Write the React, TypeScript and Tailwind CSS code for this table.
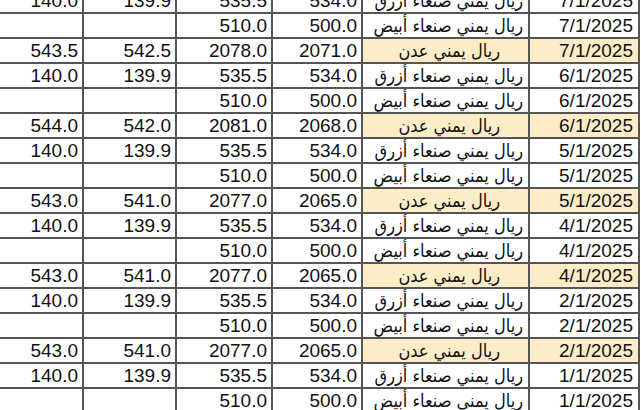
type Row = {
  date: string;
  kind: "blue" | "white" | "aden";
  buy: string;
  sell: string;
  c3?: string;
  c4?: string;
};

const LABELS = {
  blue: "ريال يمني صنعاء أزرق",
  white: "ريال يمني صنعاء أبيض",
  aden: "ريال يمني عدن",
};

const ROWS: Row[] = [
  { date: "7/1/2025", kind: "blue", buy: "534.0", sell: "535.5", c3: "139.9", c4: "140.0" },
  { date: "7/1/2025", kind: "white", buy: "500.0", sell: "510.0" },
  { date: "7/1/2025", kind: "aden", buy: "2071.0", sell: "2078.0", c3: "542.5", c4: "543.5" },
  { date: "6/1/2025", kind: "blue", buy: "534.0", sell: "535.5", c3: "139.9", c4: "140.0" },
  { date: "6/1/2025", kind: "white", buy: "500.0", sell: "510.0" },
  { date: "6/1/2025", kind: "aden", buy: "2068.0", sell: "2081.0", c3: "542.0", c4: "544.0" },
  { date: "5/1/2025", kind: "blue", buy: "534.0", sell: "535.5", c3: "139.9", c4: "140.0" },
  { date: "5/1/2025", kind: "white", buy: "500.0", sell: "510.0" },
  { date: "5/1/2025", kind: "aden", buy: "2065.0", sell: "2077.0", c3: "541.0", c4: "543.0" },
  { date: "4/1/2025", kind: "blue", buy: "534.0", sell: "535.5", c3: "139.9", c4: "140.0" },
  { date: "4/1/2025", kind: "white", buy: "500.0", sell: "510.0" },
  { date: "4/1/2025", kind: "aden", buy: "2065.0", sell: "2077.0", c3: "541.0", c4: "543.0" },
  { date: "2/1/2025", kind: "blue", buy: "534.0", sell: "535.5", c3: "139.9", c4: "140.0" },
  { date: "2/1/2025", kind: "white", buy: "500.0", sell: "510.0" },
  { date: "2/1/2025", kind: "aden", buy: "2065.0", sell: "2077.0", c3: "541.0", c4: "543.0" },
  { date: "1/1/2025", kind: "blue", buy: "534.0", sell: "535.5", c3: "139.9", c4: "140.0" },
  { date: "1/1/2025", kind: "white", buy: "500.0", sell: "510.0" },
];

const cell = "h-[25px] border-r-2 border-b-2 border-[#555555] leading-[23px] text-right whitespace-nowrap overflow-hidden";

export default function App() {
  return (
    <div className="w-[641px] h-[410px] overflow-hidden bg-white">
      <div
        className="-mt-[11px] grid grid-cols-[84px_93px_96px_90px_167px_110px] text-[19px] text-[#111111]"
        style={{ fontFamily: '"Liberation Sans", "DejaVu Sans", Arial, sans-serif' }}
      >
        {ROWS.map((r, i) => {
          const hl = r.kind === "aden";
          return (
            <div key={i} className="contents">
              <div className={`${cell} pr-[4px]`}>{r.c4 ?? ""}</div>
              <div className={`${cell} pr-[4px]`}>{r.c3 ?? ""}</div>
              <div className={`${cell} pr-[4px]`}>{r.sell}</div>
              <div className={`${cell} pr-[4px]`}>{r.buy}</div>
              <div
                dir="rtl"
                className={`${cell} font-['DejaVu_Sans_Condensed','DejaVu_Sans',sans-serif] text-[18px] ${hl ? "bg-[#fdecc8] pr-[28px]" : "pr-[5px]"}`}
              >
                {LABELS[r.kind]}
              </div>
              <div className={`${cell} pr-[5px] ${hl ? "bg-[#fdecc8]" : ""}`}>{r.date}</div>
            </div>
          );
        })}
      </div>
    </div>
  );
}
